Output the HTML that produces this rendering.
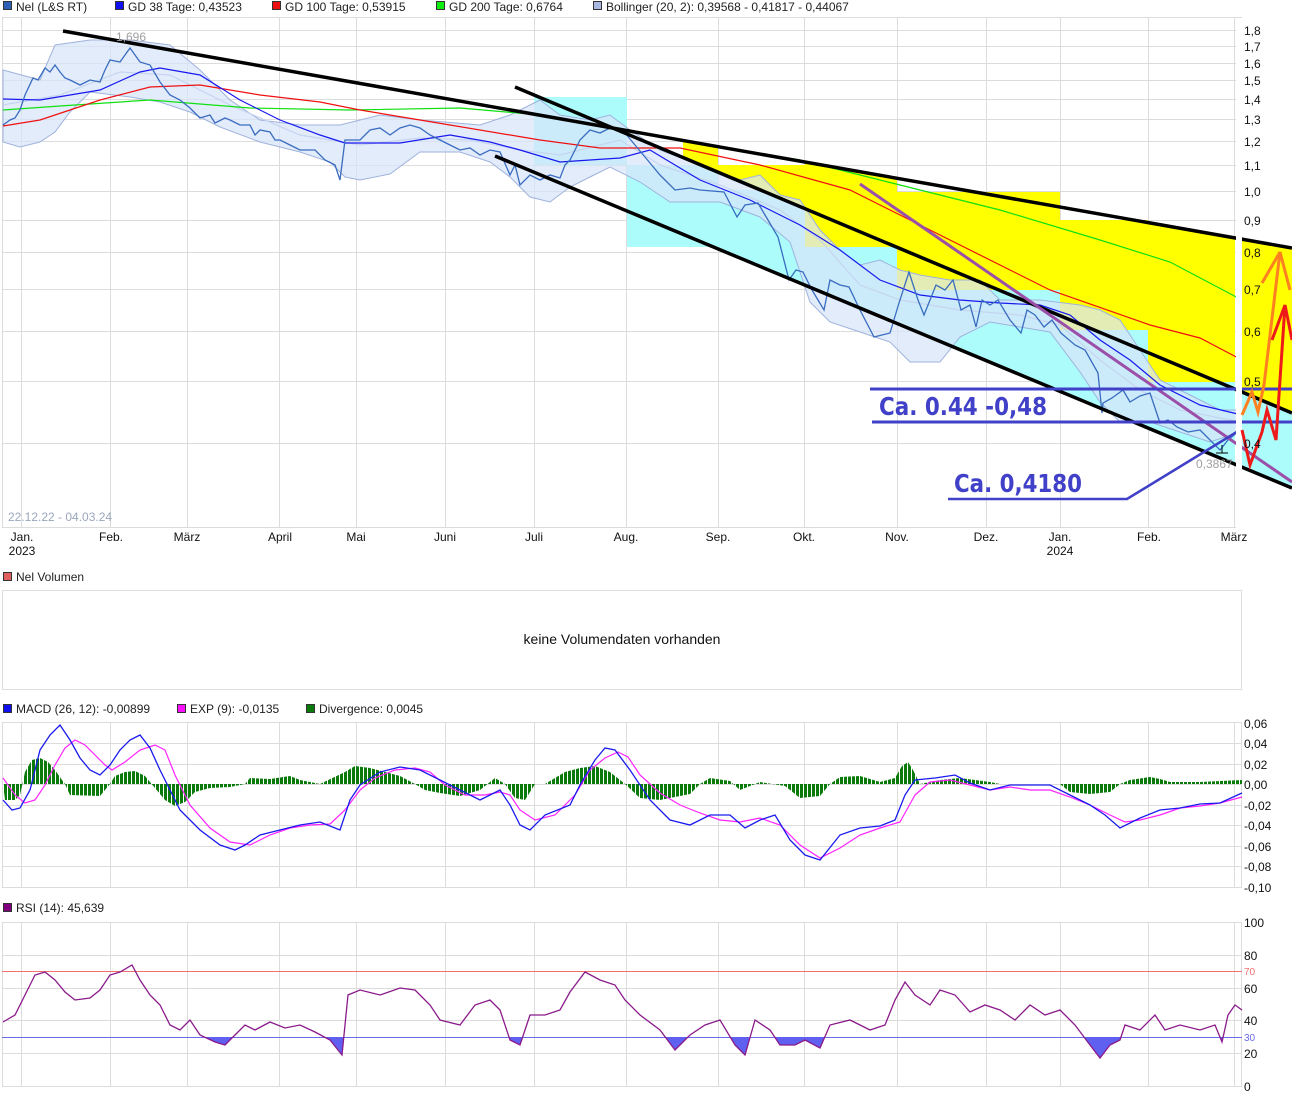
<!DOCTYPE html>
<html><head><meta charset="utf-8">
<style>
html,body{margin:0;padding:0;background:#fff;}
svg{display:block;font-family:"Liberation Sans",Arial,sans-serif;}
</style></head>
<body>
<svg width="1292" height="1100" viewBox="0 0 1292 1100" xmlns="http://www.w3.org/2000/svg">
<defs>
<clipPath id="main"><rect x="2" y="18" width="1290" height="510"/></clipPath>
<clipPath id="below30"><rect x="2" y="1037" width="1240" height="50"/></clipPath>
<pattern id="bars" width="4" height="10" patternUnits="userSpaceOnUse"><rect width="3" height="10" fill="#0a7a0a"/></pattern>
</defs>
<rect width="1292" height="1100" fill="#fff"/>

<!-- Legend -->
<g font-size="12" fill="#222">
<rect x="3.5" y="1.5" width="8" height="8" fill="#2b5fb8" stroke="#333" stroke-width="1"/><text x="16" y="11">Nel (L&amp;S RT)</text>
<rect x="115.5" y="1.5" width="8" height="8" fill="#1010ee" stroke="#333"/><text x="128" y="11">GD 38 Tage: 0,43523</text>
<rect x="272.5" y="1.5" width="8" height="8" fill="#ee1010" stroke="#333"/><text x="285" y="11">GD 100 Tage: 0,53915</text>
<rect x="436.5" y="1.5" width="8" height="8" fill="#10ee10" stroke="#333"/><text x="449" y="11">GD 200 Tage: 0,6764</text>
<rect x="593.5" y="1.5" width="8" height="8" fill="#a8b8e0" stroke="#333"/><text x="606" y="11">Bollinger (20, 2): 0,39568 - 0,41817 - 0,44067</text>
</g>

<!-- main grid -->
<g stroke="#dcdcdc" stroke-width="1">
<rect x="2.5" y="17.5" width="1239" height="510" fill="none"/>
<path d="M2 30.5H1242M2 46.5H1242M2 63.5H1242M2 80.5H1242M2 99.5H1242M2 119.5H1242M2 141.5H1242M2 165.5H1242M2 191.5H1242M2 220.5H1242M2 252.5H1242M2 289.5H1242M2 331.5H1242M2 381.5H1242M2 443.5H1242"/>
<path d="M21.5 18V528M110.5 18V528M187.5 18V528M279.5 18V528M356.5 18V528M445.5 18V528M534.5 18V528M626.5 18V528M718.5 18V528M804.5 18V528M897.5 18V528M986.5 18V528M1060.5 18V528M1148.5 18V528M1234.5 18V528"/>
</g>

<g clip-path="url(#main)">
<!-- cyan fills -->
<g fill="#adfcfc">
<rect x="534" y="97" width="93" height="68"/>
<rect x="627" y="165" width="91" height="82"/>
<polygon points="718,190 805,190 805,247 897,247 897,290 1060,290 1060,330 1148,330 1148,382 1235,382 1235,464 718,249"/>
<polygon points="1242,392 1292,413 1292,488 1242,467"/>
</g>
<!-- yellow fills -->
<g fill="#ffff00">
<polygon points="683,140.5 718,146.7 718,165 805,165 805,162 897,178.3 897,192 1060,192 1060,220 1148,220 1148,222.6 1235,238 1235,382 1148,382 1148,330 1060,330 1060,290 897,290 897,247 805,247 805,208.7 683,157.5"/>
<polygon points="1242,239 1292,248 1292,413 1242,392"/>
</g>

<!-- Bollinger band -->
<path fill="rgba(215,228,250,0.72)" stroke="#9fb2dc" stroke-width="1"
d="M3,70 L40,80 55,45 90,40 130,40 170,45 200,70 230,100 260,120 300,125 340,125 380,115 420,120 480,125 510,115 540,100 560,115 590,120 610,115 630,130 660,150 700,165 740,180 760,175 780,195 800,200 820,230 840,250 860,265 880,260 900,270 920,275 950,280 980,280 1000,300 1040,300 1080,305 1100,310 1120,320 1140,350 1160,380 1180,390 1200,400 1220,410 1240,410 L1240,432 1210,442 1180,432 1150,422 1120,422 1100,402 1080,372 1050,332 1020,327 990,322 960,337 940,362 910,362 890,342 860,332 830,322 810,302 790,242 760,217 720,202 670,202 640,182 610,167 590,177 570,187 550,202 530,197 510,177 490,162 460,152 420,152 390,174 360,180 345,177 330,162 300,152 260,142 220,127 190,112 160,102 130,97 90,92 70,112 55,132 40,142 20,147 3,142 Z"/>
<!-- Bollinger middle -->
<path fill="none" stroke="#c6d4f0" stroke-width="1.2" d="M3,105 L60,95 120,72 170,75 230,105 300,135 360,145 420,138 470,140 520,150 560,155 620,140 660,165 720,185 780,210 820,240 860,285 900,300 960,310 1020,315 1060,325 1100,360 1140,390 1180,410 1240,422"/>

<!-- GD200 green -->
<path fill="none" stroke="#10e010" stroke-width="1.2" d="M3,110 L60,106 150,100 250,108 350,110 460,108 540,115 650,135 800,160 900,185 1000,210 1100,240 1170,262 1242,300"/>
<!-- GD100 red -->
<path fill="none" stroke="#f01010" stroke-width="1.2" d="M3,126 L40,120 100,100 150,87 200,85 260,95 320,102 360,110 450,125 540,140 600,148 680,148 760,165 850,190 950,240 1050,290 1150,325 1200,338 1242,360"/>
<!-- GD38 blue -->
<path fill="none" stroke="#1818f0" stroke-width="1.2" d="M3,99 L40,100 100,90 140,72 160,68 200,75 240,100 280,120 320,135 345,143 400,143 450,135 490,142 520,150 560,162 620,158 650,150 700,180 750,200 800,225 840,250 880,280 920,295 960,300 1000,303 1040,305 1070,315 1100,340 1130,360 1160,385 1200,405 1242,415"/>
<!-- price -->
<path fill="none" stroke="#3a6cc0" stroke-width="1.3" d="M3,125 L10,120 15,118 20,110 25,95 33,78 38,80 45,68 50,72 55,65 60,72 65,78 70,80 80,85 90,80 100,82 105,70 110,60 120,62 125,55 130,48 135,55 140,62 150,65 160,82 170,95 180,100 190,108 200,118 210,115 215,123 225,118 230,120 240,125 250,125 255,135 260,130 270,132 275,140 280,140 290,145 300,150 315,150 325,160 335,165 340,180 345,140 360,140 370,130 380,128 390,135 400,128 410,125 420,128 430,135 440,140 450,145 460,150 470,148 480,155 490,150 500,152 510,175 515,165 520,185 530,175 540,180 550,175 560,178 565,165 570,160 575,150 580,140 590,130 600,133 610,128 625,133 635,145 650,163 660,175 675,190 690,188 700,190 724,192 737,217 745,205 758,203 765,215 778,237 789,280 796,270 803,272 812,290 824,310 830,280 840,285 849,287 860,310 874,337 890,333 899,303 909,272 918,300 924,315 936,285 945,290 953,280 961,310 970,305 976,327 982,300 990,305 998,300 1010,320 1021,333 1027,310 1035,315 1044,327 1052,320 1061,333 1075,345 1085,350 1098,373 1102,413 1103,403 1112,398 1123,390 1130,402 1140,396 1150,393 1160,423 1168,420 1177,427 1188,432 1200,430 1210,440 1220,450 1228,440 1240,430"/>

<!-- black trend lines -->
<g stroke="#000" stroke-width="3.5">
<line x1="63" y1="31" x2="1292" y2="248"/>
<line x1="515" y1="87" x2="1292" y2="413"/>
<line x1="495" y1="156" x2="1292" y2="488"/>
</g>
<line x1="860" y1="184" x2="1292" y2="482" stroke="#9b4fa8" stroke-width="3"/>
<!-- blue horizontal markers -->
<g stroke="#4040c8" stroke-width="3">
<line x1="870" y1="389" x2="1292" y2="389"/>
<line x1="872" y1="422" x2="1292" y2="422"/>
<polyline fill="none" points="948,499 1127,499 1240,430" stroke-width="2.5"/>
</g>
<!-- white strip -->
<rect x="1236" y="18" width="6" height="510" fill="#fff"/>
<!-- arrows -->
<polyline fill="none" stroke="#ff8020" stroke-width="3" points="1242,415 1252,392 1258,412 1264,385 1280,252 1290,290"/>
<polyline fill="none" stroke="#ff8020" stroke-width="3" points="1262,283 1280,252"/>
<polyline fill="none" stroke="#ee1a1a" stroke-width="3" points="1242,430 1250,465 1262,432 1267,410 1276,440 1285,305 1292,340"/>
<polyline fill="none" stroke="#ee1a1a" stroke-width="3" points="1272,340 1285,305"/>
</g>

<text x="116" y="41" font-size="12" fill="#a0a0a0">1,696</text>
<text x="1196" y="468" font-size="12" fill="#a0a0a0">0,3867</text>
<line x1="1216" y1="453" x2="1228" y2="453" stroke="#000"/>
<line x1="1222" y1="445" x2="1222" y2="453" stroke="#000"/>
<text x="8" y="521" font-size="12" fill="#9aa6bc">22.12.22 - 04.03.24</text>
<text x="879" y="415" font-size="25" font-weight="bold" fill="#4040c8" font-family="DejaVu Sans, Liberation Sans, sans-serif" textLength="168" lengthAdjust="spacingAndGlyphs">Ca. 0.44 -0,48</text>
<text x="954" y="492" font-size="25" font-weight="bold" fill="#4040c8" font-family="DejaVu Sans, Liberation Sans, sans-serif" textLength="128" lengthAdjust="spacingAndGlyphs">Ca. 0,4180</text>

<!-- right axis main -->
<g font-size="12" fill="#111">
<text x="1244" y="35">1,8</text><text x="1244" y="51">1,7</text><text x="1244" y="68">1,6</text><text x="1244" y="85">1,5</text><text x="1244" y="104">1,4</text><text x="1244" y="124">1,3</text><text x="1244" y="146">1,2</text><text x="1244" y="170">1,1</text><text x="1244" y="196">1,0</text><text x="1244" y="225">0,9</text><text x="1244" y="257">0,8</text><text x="1244" y="294">0,7</text><text x="1244" y="336">0,6</text><text x="1244" y="386">0,5</text><text x="1244" y="448">0,4</text>
</g>
<!-- x axis -->
<g font-size="12" fill="#111" text-anchor="middle">
<text x="22" y="541">Jan.</text><text x="22" y="555">2023</text>
<text x="111" y="541">Feb.</text><text x="187" y="541">März</text><text x="280" y="541">April</text><text x="356" y="541">Mai</text><text x="445" y="541">Juni</text><text x="534" y="541">Juli</text><text x="626" y="541">Aug.</text><text x="718" y="541">Sep.</text><text x="804" y="541">Okt.</text><text x="897" y="541">Nov.</text><text x="986" y="541">Dez.</text><text x="1060" y="541">Jan.</text><text x="1060" y="555">2024</text><text x="1149" y="541">Feb.</text><text x="1234" y="541">März</text>
</g>

<!-- Volume -->
<rect x="3.5" y="572.5" width="8" height="8" fill="#e06060" stroke="#333"/>
<text x="16" y="581" font-size="12" fill="#222">Nel Volumen</text>
<rect x="2.5" y="590.5" width="1239" height="99" fill="none" stroke="#dcdcdc"/>
<text x="622" y="644" font-size="14" fill="#111" text-anchor="middle">keine Volumendaten vorhanden</text>

<!-- MACD -->
<g font-size="12" fill="#222">
<rect x="3.5" y="704.5" width="8" height="8" fill="#1010ee" stroke="#333"/><text x="16" y="713">MACD (26, 12): -0,00899</text>
<rect x="177.5" y="704.5" width="8" height="8" fill="#ff10ff" stroke="#333"/><text x="190" y="713">EXP (9): -0,0135</text>
<rect x="306.5" y="704.5" width="8" height="8" fill="#0a7a0a" stroke="#333"/><text x="319" y="713">Divergence: 0,0045</text>
</g>
<g stroke="#dcdcdc">
<rect x="2.5" y="722.5" width="1239" height="165" fill="none"/>
<path d="M2 743.5H1242M2 764.5H1242M2 784.5H1242M2 805.5H1242M2 825.5H1242M2 846.5H1242M2 866.5H1242"/>
<path d="M21.5 722V888M110.5 722V888M187.5 722V888M279.5 722V888M356.5 722V888M445.5 722V888M534.5 722V888M626.5 722V888M718.5 722V888M804.5 722V888M897.5 722V888M986.5 722V888M1060.5 722V888M1148.5 722V888M1234.5 722V888"/>
</g>
<path fill="url(#bars)" d="M3,784 L5,800 15,800 20,795 25,772 32,760 40,758 48,762 55,770 62,780 65,784 70,795 100,796 110,784 115,776 125,772 135,771 145,776 155,788 165,800 175,806 185,802 195,792 210,788 230,787 245,784 250,778 270,779 290,776 300,780 320,784 345,772 355,766 370,768 385,772 400,776 415,784 425,790 440,793 460,796 480,790 495,778 505,784 515,798 525,800 535,784 545,784 565,772 580,768 595,766 610,772 625,784 640,798 660,800 690,794 700,784 710,778 730,781 740,790 760,782 785,786 800,798 820,796 830,784 840,777 860,776 880,782 895,778 902,766 908,762 913,770 920,784 940,780 960,778 975,780 990,782 1000,784 1060,784 1070,792 1090,794 1110,792 1120,784 1130,780 1150,777 1160,779 1170,782 1200,782 1242,780 1242,784 Z"/>
<path fill="none" stroke="#ff22ff" stroke-width="1.2" d="M3,778 L15,795 25,803 35,800 45,785 55,765 65,748 75,740 85,745 95,755 105,765 112,770 125,762 140,750 155,745 165,750 175,775 190,805 210,828 230,842 250,845 270,835 290,828 310,825 330,824 345,810 360,790 375,778 395,770 415,768 430,772 445,785 465,795 485,795 500,792 510,795 520,810 535,820 555,815 575,795 590,770 605,758 618,752 628,757 640,775 660,793 680,805 700,813 720,820 740,822 760,818 780,825 800,845 820,858 840,848 860,835 880,828 900,822 915,795 930,782 950,780 970,785 990,790 1010,787 1030,790 1050,790 1070,797 1090,805 1110,815 1125,822 1140,820 1160,815 1180,808 1200,806 1220,803 1242,797"/>
<path fill="none" stroke="#1a1aee" stroke-width="1.3" d="M3,800 L12,810 20,808 30,790 40,750 50,735 60,725 70,740 80,758 90,770 100,775 110,765 120,750 130,740 140,735 150,748 160,770 170,790 180,810 200,830 220,845 235,850 245,845 260,835 280,830 300,825 320,822 340,830 350,800 360,785 380,772 400,767 420,770 440,780 460,790 480,800 500,790 510,805 520,825 530,830 545,815 570,805 580,785 595,760 605,748 615,750 630,770 650,800 670,820 690,825 710,815 730,815 745,828 760,820 775,815 790,840 805,855 820,860 840,835 860,828 880,826 895,820 905,795 915,780 935,778 955,775 970,783 990,790 1010,785 1030,785 1050,785 1070,795 1090,805 1105,815 1120,828 1140,818 1160,810 1180,808 1200,804 1220,803 1242,793"/>
<g font-size="12" fill="#111">
<text x="1244" y="728">0,06</text><text x="1244" y="748">0,04</text><text x="1244" y="769">0,02</text><text x="1244" y="789">0,00</text><text x="1244" y="810">-0,02</text><text x="1244" y="830">-0,04</text><text x="1244" y="851">-0,06</text><text x="1244" y="871">-0,08</text><text x="1244" y="892">-0,10</text>
</g>

<!-- RSI -->
<rect x="3.5" y="903.5" width="8" height="8" fill="#800080" stroke="#333"/>
<text x="16" y="912" font-size="12" fill="#222">RSI (14): 45,639</text>
<g stroke="#dcdcdc">
<rect x="2.5" y="922.5" width="1239" height="164" fill="none"/>
<path d="M2 955.5H1242M2 988.5H1242M2 1020.5H1242M2 1053.5H1242"/>
<path d="M21.5 922V1087M110.5 922V1087M187.5 922V1087M279.5 922V1087M356.5 922V1087M445.5 922V1087M534.5 922V1087M626.5 922V1087M718.5 922V1087M804.5 922V1087M897.5 922V1087M986.5 922V1087M1060.5 922V1087M1148.5 922V1087M1234.5 922V1087"/>
</g>
<line x1="2" y1="971.5" x2="1242" y2="971.5" stroke="#f07070"/>
<line x1="2" y1="1037.5" x2="1242" y2="1037.5" stroke="#6a6aee"/>
<path clip-path="url(#below30)" fill="#6060f0" d="M3,1022 L15,1015 25,995 35,975 45,972 55,980 65,992 75,1000 90,998 100,990 110,975 120,972 132,965 140,980 150,995 160,1005 170,1025 180,1030 190,1020 200,1035 215,1042 225,1045 235,1035 245,1025 255,1030 270,1022 285,1028 300,1025 315,1032 330,1040 342,1055 348,995 360,990 380,995 400,988 415,990 430,1005 440,1020 460,1025 475,1005 490,1000 500,1010 510,1040 520,1045 530,1015 545,1015 560,1010 570,992 585,972 600,980 615,985 625,1000 640,1015 660,1030 675,1050 690,1035 705,1025 720,1020 735,1045 745,1055 755,1020 770,1030 780,1045 795,1045 805,1040 820,1048 830,1025 850,1020 870,1030 885,1025 895,1000 905,982 915,995 930,1005 940,990 955,995 970,1012 985,1005 1000,1010 1015,1020 1030,1005 1045,1015 1060,1010 1075,1025 1090,1045 1100,1058 1110,1045 1120,1040 1125,1025 1140,1030 1155,1015 1165,1030 1180,1025 1200,1030 1215,1025 1222,1042 1228,1015 1235,1005 1242,1010 L1242,1037 3,1037 Z"/>
<path fill="none" stroke="#8a1a8a" stroke-width="1.3" d="M3,1022 L15,1015 25,995 35,975 45,972 55,980 65,992 75,1000 90,998 100,990 110,975 120,972 132,965 140,980 150,995 160,1005 170,1025 180,1030 190,1020 200,1035 215,1042 225,1045 235,1035 245,1025 255,1030 270,1022 285,1028 300,1025 315,1032 330,1040 342,1055 348,995 360,990 380,995 400,988 415,990 430,1005 440,1020 460,1025 475,1005 490,1000 500,1010 510,1040 520,1045 530,1015 545,1015 560,1010 570,992 585,972 600,980 615,985 625,1000 640,1015 660,1030 675,1050 690,1035 705,1025 720,1020 735,1045 745,1055 755,1020 770,1030 780,1045 795,1045 805,1040 820,1048 830,1025 850,1020 870,1030 885,1025 895,1000 905,982 915,995 930,1005 940,990 955,995 970,1012 985,1005 1000,1010 1015,1020 1030,1005 1045,1015 1060,1010 1075,1025 1090,1045 1100,1058 1110,1045 1120,1040 1125,1025 1140,1030 1155,1015 1165,1030 1180,1025 1200,1030 1215,1025 1222,1042 1228,1015 1235,1005 1242,1010"/>
<g font-size="12" fill="#111">
<text x="1244" y="927">100</text><text x="1244" y="960">80</text><text x="1244" y="975" font-size="10" fill="#f07070">70</text><text x="1244" y="993">60</text><text x="1244" y="1025">40</text><text x="1244" y="1041" font-size="10" fill="#6a6aee">30</text><text x="1244" y="1058">20</text><text x="1244" y="1091">0</text>
</g>
</svg>
</body></html>
